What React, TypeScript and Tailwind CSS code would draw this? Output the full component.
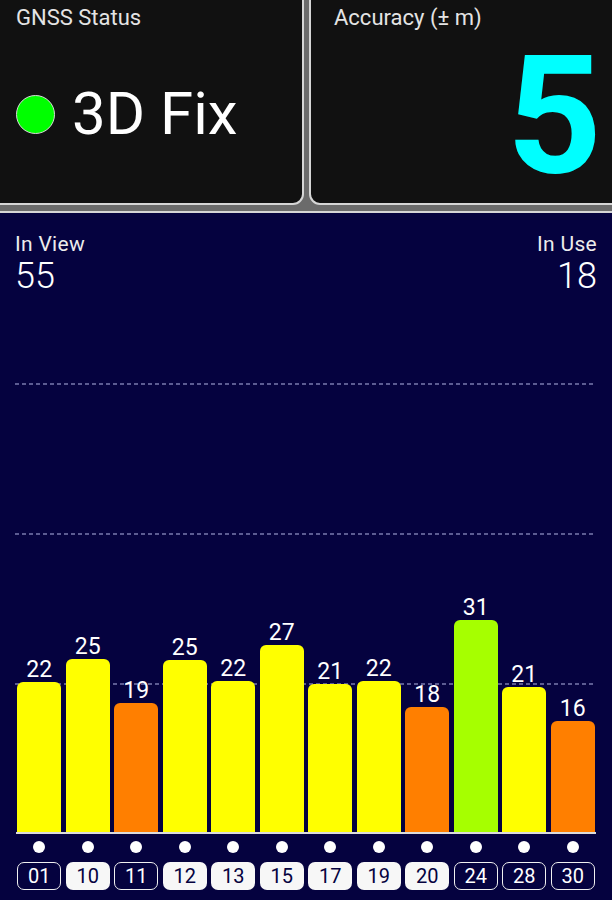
import React from 'react'

type Sat = { prn: string; snr: number; h: number; color: string; used: boolean }

const sats: Sat[] = [
  { prn: '01', snr: 22, h: 150, color: 'bg-[#ffff00]', used: false },
  { prn: '10', snr: 25, h: 173, color: 'bg-[#ffff00]', used: true },
  { prn: '11', snr: 19, h: 129, color: 'bg-[#ff7f00]', used: false },
  { prn: '12', snr: 25, h: 172, color: 'bg-[#ffff00]', used: true },
  { prn: '13', snr: 22, h: 151, color: 'bg-[#ffff00]', used: true },
  { prn: '15', snr: 27, h: 187, color: 'bg-[#ffff00]', used: true },
  { prn: '17', snr: 21, h: 148, color: 'bg-[#ffff00]', used: true },
  { prn: '19', snr: 22, h: 151, color: 'bg-[#ffff00]', used: true },
  { prn: '20', snr: 18, h: 125, color: 'bg-[#ff7f00]', used: true },
  { prn: '24', snr: 31, h: 212, color: 'bg-[#a6ff00]', used: false },
  { prn: '28', snr: 21, h: 145, color: 'bg-[#ffff00]', used: false },
  { prn: '30', snr: 16, h: 111, color: 'bg-[#ff7f00]', used: false },
]

const dashed = 'absolute left-[15px] right-[16px] h-[2px] bg-[repeating-linear-gradient(90deg,#5c5c92_0_4px,transparent_4px_7px)]'

export default function App() {
  return (
    <div className="flex h-[900px] w-[612px] flex-col overflow-hidden bg-[#6b6b6b] font-['Roboto',sans-serif]">
      {/* status cards */}
      <div className="-mt-[10px] flex h-[215px] shrink-0 gap-[5px]">
        <div className="-ml-[10px] flex w-[314px] shrink-0 flex-col rounded-[11px] border-2 border-[#d6d6d6] bg-[#111111] pl-[24px] pt-[14px]">
          <div className="text-[22px] leading-[24px] text-[#e4e4e4]">GNSS Status</div>
          <div className="mt-[54px] flex h-[60px] items-center">
            <span className="h-[39px] w-[39px] rounded-full border-[1.5px] border-[#d8d8d8] bg-[#00ff00]" />
            <span className="ml-[17px] text-[60px] leading-none text-white">3D Fix</span>
          </div>
        </div>
        <div className="flex w-[313px] shrink-0 flex-col rounded-[11px] border-2 border-[#d6d6d6] bg-[#111111] pl-[23px] pr-[18px] pt-[14px]">
          <div className="text-[22px] leading-[24px] text-[#e4e4e4]">Accuracy (± m)</div>
          <div className="mt-[3px] self-end text-[166px] font-bold leading-none text-[#00ffff]">5</div>
        </div>
      </div>

      {/* satellite panel */}
      <div className="mt-[6px] flex flex-1 flex-col border-t-2 border-[#d6d6d6] bg-[#05023f]">
        <div className="flex justify-between px-[15px] pt-[19px] text-white">
          <div>
            <div className="text-[21px] leading-[24px] tracking-[0.3px] text-[#ececec]">In View</div>
            <div className="text-[36px] font-light leading-[40px]">55</div>
          </div>
          <div className="text-right">
            <div className="text-[21px] leading-[24px] tracking-[0.3px] text-[#ececec]">In Use</div>
            <div className="text-[36px] font-light leading-[40px]">18</div>
          </div>
        </div>

        <div className="relative flex flex-1 items-end px-[15px]">
          <div className={`${dashed} bottom-[447px]`} />
          <div className={`${dashed} bottom-[297px]`} />
          <div className={`${dashed} bottom-[147px]`} />
          {sats.map((s) => (
            <div key={s.prn} className="relative flex flex-1 flex-col items-center">
              <span className="mb-[1px] text-[23px] leading-none text-white">{s.snr}</span>
              <div className={`w-[44px] rounded-t-[6px] ${s.color}`} style={{ height: s.h }} />
            </div>
          ))}
        </div>
        <div className="mx-[16px] h-[2px] bg-[#dcdcdc]" />

        <div className="mt-[7px] flex px-[15px]">
          {sats.map((s) => (
            <div key={s.prn} className="flex flex-1 justify-center">
              <span className="h-[12px] w-[12px] rounded-full bg-white" />
            </div>
          ))}
        </div>

        <div className="mb-[10px] mt-[9px] flex px-[15px]">
          {sats.map((s) => (
            <div key={s.prn} className="flex flex-1 justify-center">
              <span
                className={`flex h-[28px] w-[44px] items-center justify-center rounded-[7px] text-[20px] leading-none ${
                  s.used ? 'bg-[#f7f7f7] text-[#05023f]' : 'border-[1.5px] border-[#f0f0f0] text-white'
                }`}
              >
                {s.prn}
              </span>
            </div>
          ))}
        </div>
      </div>
    </div>
  )
}
